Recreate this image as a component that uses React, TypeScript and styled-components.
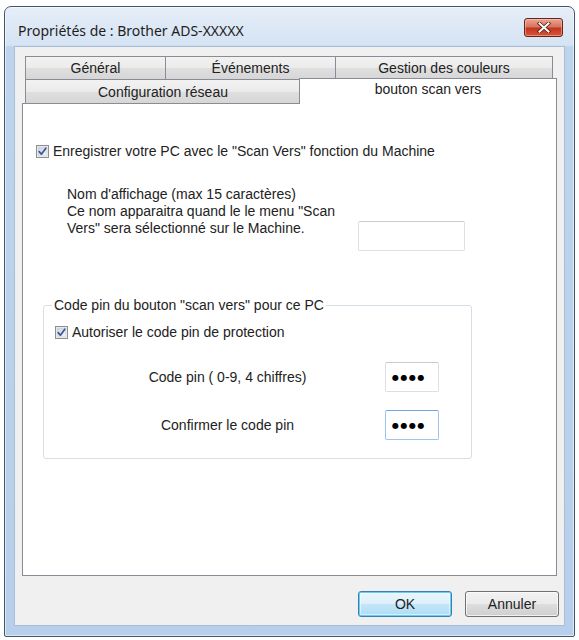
import React from "react";
import styled, { createGlobalStyle } from "styled-components";

const Global = createGlobalStyle`
  html, body { margin: 0; padding: 0; background: #ffffff; }
  body {
    font-family: "Liberation Sans", Arial, sans-serif;
    font-size: 14px;
    color: #222222;
  }
  * { box-sizing: border-box; }
`;

const Window = styled.div`
  margin: 6px 0 0 4px;
  width: 571px;
  height: 631px;
  border: 1px solid #44556a;
  border-radius: 7px 7px 2px 2px;
  background: linear-gradient(
    to bottom,
    #e6eef8 0px,
    #d5e3f3 38px,
    #bdd4ec 40px,
    #b7cfea 100%
  );
  box-shadow: inset 0 0 0 1px rgba(255, 255, 255, 0.55);
  display: flex;
  flex-direction: column;
  padding: 0 9px 10px 9px;
`;

const TitleBar = styled.div`
  height: 39px;
  display: flex;
  align-items: flex-start;
  justify-content: space-between;
  padding-left: 4px;
`;

const Title = styled.div`
  font-family: "Noto Sans", "Open Sans", sans-serif;
  font-size: 14px;
  color: #1e1e1e;
  margin-top: 14px;
`;

const CloseButton = styled.div`
  margin-top: 11px;
  margin-right: 2px;
  width: 39px;
  height: 19px;
  border: 1px solid #6b2219;
  border-radius: 3px;
  background: linear-gradient(
    to bottom,
    #e9a596 0%,
    #d8755f 45%,
    #c3351f 55%,
    #d5573a 100%
  );
  box-shadow: inset 0 0 0 1px rgba(255, 210, 195, 0.45);
  display: flex;
  align-items: center;
  justify-content: center;
`;

const Client = styled.div`
  flex: 1;
  background: #f0f0f0;
  border: 1px solid #a8bdd6;
  display: flex;
  flex-direction: column;
  padding: 10px 7px 0 7px;
`;

const TabStrip = styled.div`
  display: flex;
  flex-direction: column;
  padding: 0 3px;
`;

const TabRow = styled.div`
  display: flex;
  align-items: flex-end;
  height: 23px;
`;

const Tab = styled.div<{ $w: number; $selected?: boolean; $first?: boolean }>`
  width: ${(p) => p.$w}px;
  height: ${(p) => (p.$selected ? 26 : 24)}px;
  margin-left: ${(p) => (p.$first ? 0 : p.$selected ? -2 : -1)}px;
  margin-right: ${(p) => (p.$selected ? -3 : 0)}px;
  margin-bottom: ${(p) => (p.$selected ? -1 : 0)}px;
  border: 1px solid #898c95;
  border-bottom: ${(p) => (p.$selected ? "none" : "1px solid #898c95")};
  background: ${(p) =>
    p.$selected
      ? "#ffffff"
      : "linear-gradient(to bottom, #f2f2f2 0%, #ebebeb 50%, #dfdfdf 51%, #d6d6d6 100%)"};
  position: relative;
  z-index: ${(p) => (p.$selected ? 2 : 1)};
  display: flex;
  justify-content: center;
  align-items: ${(p) => (p.$selected ? "flex-start" : "center")};
  padding-top: ${(p) => (p.$selected ? 2 : 0)}px;
  font-size: 14px;
  color: #222222;
  white-space: nowrap;
`;

const SecondRow = styled(TabRow)`
  margin-top: -1px;
  height: 24px;
  & > div:not(:last-child) {
    border-bottom: none;
    height: 24px;
  }
`;

const Panel = styled.div`
  height: 473px;
  background: #ffffff;
  border: 1px solid #898c95;
  display: flex;
  flex-direction: column;
  padding: 39px 0 0 0;
  position: relative;
  z-index: 1;
`;

const CheckRow = styled.div<{ $indent: number }>`
  display: flex;
  align-items: center;
  gap: 4px;
  padding-left: ${(p) => p.$indent}px;
  height: 16px;
  line-height: 16px;
  white-space: nowrap;
`;

const NameBlock = styled.div`
  margin-top: 27px;
  display: flex;
  align-items: flex-start;
  padding-left: 44px;
`;

const NameLabel = styled.div`
  width: 291px;
  line-height: 17px;
  white-space: nowrap;
`;

const TextBox = styled.div<{ $w: number; $focused?: boolean }>`
  width: ${(p) => p.$w}px;
  height: 30px;
  background: #ffffff;
  border: 1px solid ${(p) => (p.$focused ? "#9cc4ec" : "#dcdfe3")};
  border-top-color: ${(p) => (p.$focused ? "#6fa8e0" : "#c7cbd1")};
  border-radius: 2px;
  display: flex;
  align-items: center;
  padding-left: 6px;
`;

const NameBox = styled(TextBox)`
  margin-top: 35px;
`;

const Group = styled.fieldset`
  margin: 46px 0 0 20px;
  width: 429px;
  border: 1px solid #d5dfe5;
  border-radius: 3px;
  padding: 0 0 18px 11px;
  min-width: 0;
`;

const Legend = styled.legend`
  padding: 0 2px;
  margin-left: -3px;
  line-height: 16px;
  white-space: nowrap;
`;

const GroupCheck = styled(CheckRow)`
  margin-top: 11px;
`;

const PinRow = styled.div<{ $mt: number }>`
  display: flex;
  align-items: center;
  margin-top: ${(p) => p.$mt}px;
  padding-left: 15px;
`;

const PinLabel = styled.div`
  width: 315px;
  text-align: center;
  white-space: nowrap;
`;

const Dots = styled.span`
  font-family: "DejaVu Sans", sans-serif;
  font-size: 8px;
  letter-spacing: 1.5px;
  color: #000;
`;

const ButtonRow = styled.div`
  display: flex;
  justify-content: flex-end;
  gap: 13px;
  margin-top: 15px;
  margin-right: -2px;
`;

const Button = styled.div<{ $default?: boolean }>`
  width: 94px;
  height: 26px;
  border-radius: 3px;
  border: 1px solid ${(p) => (p.$default ? "#3c7fb1" : "#707070")};
  background: ${(p) =>
    p.$default
      ? "linear-gradient(to bottom, #ecf6fc 0%, #dcf0fb 48%, #c3e5f9 52%, #b0dcf6 100%)"
      : "linear-gradient(to bottom, #f2f2f2 0%, #ebebeb 48%, #dddddd 52%, #cfcfcf 100%)"};
  box-shadow: ${(p) =>
    p.$default
      ? "inset 0 0 0 1px #62d0f5, inset 0 0 0 2px rgba(255,255,255,0.5)"
      : "inset 0 0 0 1px rgba(255,255,255,0.7)"};
  display: flex;
  align-items: center;
  justify-content: center;
  font-size: 14px;
  color: #222222;
`;

const Check: React.FC = () => (
  <svg width="13" height="13" viewBox="0 0 13 13" style={{ flex: "none" }}>
    <defs>
      <linearGradient id="cbg" x1="0" y1="0" x2="1" y2="1">
        <stop offset="0" stopColor="#cbd3dc" />
        <stop offset="1" stopColor="#f4f6f8" />
      </linearGradient>
    </defs>
    <rect x="0.5" y="0.5" width="12" height="12" fill="#f4f4f4" stroke="#8f8f8f" />
    <rect x="2" y="2" width="9" height="9" fill="url(#cbg)" stroke="#c2cad4" strokeWidth="0.6" />
    <path
      d="M3.2 6.6 L5.4 9.2 L9.8 3.2"
      fill="none"
      stroke="#3b5694"
      strokeWidth="1.7"
      strokeLinecap="round"
      strokeLinejoin="round"
    />
  </svg>
);

const CloseX: React.FC = () => (
  <svg width="14" height="11" viewBox="0 0 14 11">
    <path
      d="M2.5 1.5 L11.5 9.5 M11.5 1.5 L2.5 9.5"
      stroke="#5a1a12"
      strokeWidth="3.6"
      strokeLinecap="square"
    />
    <path
      d="M2.5 1.5 L11.5 9.5 M11.5 1.5 L2.5 9.5"
      stroke="#ffffff"
      strokeWidth="2"
      strokeLinecap="square"
    />
  </svg>
);

export default function App() {
  return (
    <>
      <Global />
      <Window>
        <TitleBar>
          <Title>Propriétés de : Brother ADS-XXXXX</Title>
          <CloseButton>
            <CloseX />
          </CloseButton>
        </TitleBar>
        <Client>
          <TabStrip>
            <TabRow>
              <Tab $w={141} $first>
                Général
              </Tab>
              <Tab $w={171}>Événements</Tab>
              <Tab $w={218}>Gestion des couleurs</Tab>
            </TabRow>
            <SecondRow>
              <Tab $w={276} $first>
                Configuration réseau
              </Tab>
              <Tab $w={258} $selected>
                bouton scan vers
              </Tab>
            </SecondRow>
          </TabStrip>
          <Panel>
            <CheckRow $indent={13}>
              <Check />
              <span>Enregistrer votre PC avec le "Scan Vers" fonction du Machine</span>
            </CheckRow>
            <NameBlock>
              <NameLabel>
                Nom d'affichage (max 15 caractères)
                <br />
                Ce nom apparaitra quand le le menu "Scan
                <br />
                Vers" sera sélectionné sur le Machine.
              </NameLabel>
              <NameBox $w={107} />
            </NameBlock>
            <Group>
              <Legend>Code pin du bouton "scan vers" pour ce PC</Legend>
              <GroupCheck $indent={0}>
                <Check />
                <span>Autoriser le code pin de protection</span>
              </GroupCheck>
              <PinRow $mt={22}>
                <PinLabel>Code pin ( 0-9, 4 chiffres)</PinLabel>
                <TextBox $w={54}>
                  <Dots>●●●●</Dots>
                </TextBox>
              </PinRow>
              <PinRow $mt={18}>
                <PinLabel>Confirmer le code pin</PinLabel>
                <TextBox $w={54} $focused>
                  <Dots>●●●●</Dots>
                </TextBox>
              </PinRow>
            </Group>
          </Panel>
          <ButtonRow>
            <Button $default>OK</Button>
            <Button>Annuler</Button>
          </ButtonRow>
        </Client>
      </Window>
    </>
  );
}
